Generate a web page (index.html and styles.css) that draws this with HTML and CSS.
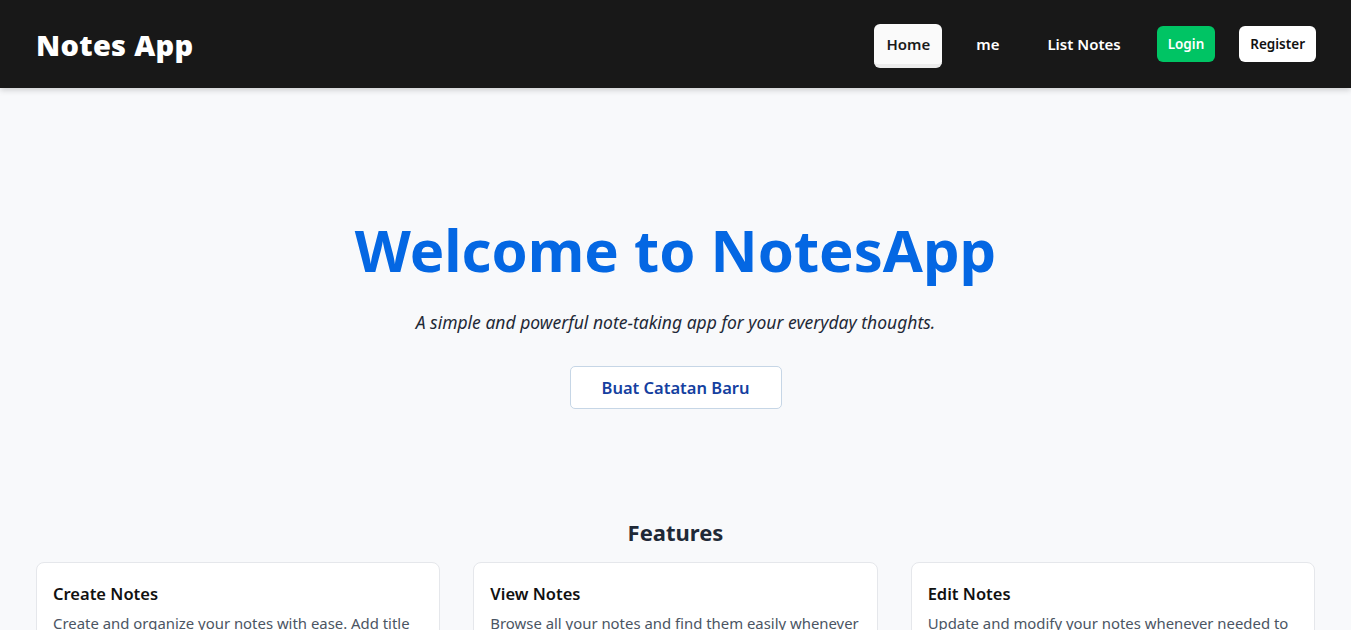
FILE: index.html
```html
<!DOCTYPE html>
<html lang="en">
<head>
<meta charset="utf-8">
<title>Notes App</title>
<link rel="stylesheet" href="styles.css">
</head>
<body>
<header class="navbar">
  <div class="brand">Notes App</div>
  <nav class="nav">
    <a class="nav-link active" href="#">Home</a>
    <a class="nav-link" href="#">me</a>
    <a class="nav-link" href="#">List Notes</a>
    <a class="btn btn-login" href="#">Login</a>
    <a class="btn btn-register" href="#">Register</a>
  </nav>
</header>
<main class="main">
  <section class="hero">
    <h1 class="hero-title">Welcome to NotesApp</h1>
    <p class="hero-sub">A simple and powerful note-taking app for your everyday thoughts.</p>
    <a class="hero-btn" href="#">Buat Catatan Baru</a>
  </section>
  <section class="features">
    <h2 class="features-title">Features</h2>
    <div class="cards">
      <div class="card">
        <h3 class="card-title">Create Notes</h3>
        <p class="card-text">Create and organize your notes with ease. Add title and content to keep your thoughts in order.</p>
      </div>
      <div class="card">
        <h3 class="card-title">View Notes</h3>
        <p class="card-text">Browse all your notes and find them easily whenever you need them.</p>
      </div>
      <div class="card">
        <h3 class="card-title">Edit Notes</h3>
        <p class="card-text">Update and modify your notes whenever needed to keep them up to date.</p>
      </div>
    </div>
  </section>
</main>
</body>
</html>
```

FILE: styles.css
```css
* { box-sizing: border-box; }
html, body { margin: 0; padding: 0; }
body {
  font-family: "Noto Sans", "Open Sans", sans-serif;
  background: #f8f9fb;
  color: #1f2937;
}
a { text-decoration: none; }

.navbar {
  height: 88px;
  background: #181818;
  display: flex;
  align-items: center;
  justify-content: space-between;
  padding: 0 35px 0 36px;
  box-shadow: 0 2px 6px rgba(0,0,0,0.18);
}
.brand {
  color: #ffffff;
  font-size: 29px;
  font-weight: 900;
  letter-spacing: 0.3px;
}
.nav {
  display: flex;
  align-items: center;
  gap: 24px;
}
.nav-link {
  color: #ffffff;
  font-size: 15px;
  font-weight: 600;
  padding: 10px 12px;
  line-height: 20px;
  border-radius: 6px;
}
.nav-link.active {
  background: #fafafa;
  color: #1a1a1a;
  border-bottom: 4px solid #ececec;
  margin-top: 4px;
  padding-bottom: 10px;
  margin-right: -2px;
}
.btn {
  font-size: 13.5px;
  font-weight: 600;
  height: 36px;
  line-height: 36px;
  padding: 0 11px;
  border-radius: 6px;
}
.btn-login {
  background: #00c464;
  color: #ffffff;
}
.btn-register {
  background: #ffffff;
  color: #111111;
}

.main {
  padding: 0 36px;
}
.hero {
  display: flex;
  flex-direction: column;
  align-items: center;
  padding-top: 126px;
}
.hero-title {
  margin: 0;
  font-size: 58px;
  font-weight: 700;
  color: #0467e3;
  line-height: 72px;
}
.hero-sub {
  margin: 24px 0 0;
  font-size: 17.5px;
  font-style: italic;
  color: #1f2937;
  line-height: 24px;
}
.hero-btn {
  margin-top: 32px;
  width: 212px;
  height: 43px;
  display: flex;
  align-items: center;
  justify-content: center;
  background: #ffffff;
  border: 1px solid #c6d6e6;
  border-radius: 5px;
  color: #1440a0;
  font-size: 16.5px;
  font-weight: 600;
}

.features {
  padding-top: 108px;
}
.features-title {
  margin: 0;
  text-align: center;
  font-size: 22px;
  font-weight: 700;
  color: #1f2937;
  line-height: 30px;
}
.cards {
  margin-top: 15px;
  display: grid;
  grid-template-columns: repeat(3, 1fr);
  gap: 33px;
}
.card {
  background: #ffffff;
  border: 1px solid #e5e7eb;
  border-radius: 8px;
  padding: 20px 16px;
}
.card-title {
  margin: 0;
  font-size: 16.5px;
  font-weight: 600;
  color: #111111;
  line-height: 22px;
}
.card-text {
  margin: 7px 0 0;
  font-size: 14.9px;
  color: #4b5563;
  line-height: 22px;
}
```
